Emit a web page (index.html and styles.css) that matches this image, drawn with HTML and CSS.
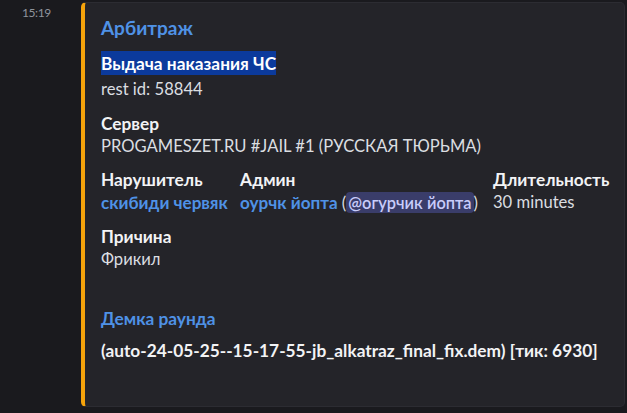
FILE: index.html
```html
<!DOCTYPE html>
<html lang="ru">
<head>
<meta charset="utf-8">
<title>Арбитраж</title>
<link rel="stylesheet" href="styles.css">
</head>
<body>
<div class="message">
  <div class="gutter"><span class="timestamp">15:19</span></div>
  <article class="embed">
    <div class="embed-title">Арбитраж</div>
    <div class="embed-desc">
      <div class="line"><strong class="sel">Выдача наказания ЧС</strong></div>
      <div class="line">rest id: 58844</div>
    </div>
    <div class="fields">
      <div class="field field-full">
        <div class="field-name">Сервер</div>
        <div class="field-value">PROGAMESZET.RU #JAIL #1 (РУССКАЯ ТЮРЬМА)</div>
      </div>
      <div class="field-row">
        <div class="field">
          <div class="field-name">Нарушитель</div>
          <div class="field-value link">скибиди червяк</div>
        </div>
        <div class="field">
          <div class="field-name">Админ</div>
          <div class="field-value"><span class="link">оурчк йопта</span> (<span class="mention">@огурчик йопта</span>)</div>
        </div>
        <div class="field">
          <div class="field-name">Длительность</div>
          <div class="field-value">30 minutes</div>
        </div>
      </div>
      <div class="field field-full">
        <div class="field-name">Причина</div>
        <div class="field-value">Фрикил</div>
      </div>
      <div class="field field-full field-demo">
        <div class="field-name link">Демка раунда</div>
        <div class="field-value demo-value">(auto-24-05-25--15-17-55-jb_alkatraz_final_fix.dem) [тик: 6930]</div>
      </div>
    </div>
  </article>
</div>
</body>
</html>
```
FILE: styles.css
```css
html, body {
  margin: 0;
  padding: 0;
  background: #1a1a1e;
}
body {
  font-family: Lato, "Noto Sans", sans-serif;
  color: #dbdee1;
  width: 627px;
  height: 413px;
  overflow: hidden;
}
.message {
  display: flex;
  padding-top: 2px;
}
.gutter {
  width: 81px;
  flex: 0 0 81px;
}
.timestamp {
  display: block;
  padding-left: 22px;
  margin-top: 3px;
  font-size: 12px;
  letter-spacing: -0.4px;
  line-height: 16px;
  color: #8f949c;
}
.embed {
  box-sizing: border-box;
  width: 544px;
  height: 405px;
  background: #242429;
  border: 1px solid #2c2c32;
  border-left: 4px solid #f5a30b;
  border-radius: 5px;
  padding: 11px 16px 0 16px;
}
.embed-title {
  font-size: 19px;
  font-weight: 700;
  line-height: 27px;
  color: #4f92e6;
  white-space: nowrap;
}
.embed-desc {
  margin-top: 9.5px;
  font-size: 16.6px;
  line-height: 25px;
}
.sel {
  font-weight: 700;
  font-size: 17.3px;
  color: #ffffff;
  background: #0b3a9c;
  padding: 1.5px 0;
}
.fields {
  margin-top: 10.5px;
  display: flex;
  flex-direction: column;
  gap: 10px;
}
.field-row {
  display: grid;
  grid-template-columns: 139px 253px auto;
}
.field {
  white-space: nowrap;
}
.field-name {
  font-size: 17.3px;
  font-weight: 700;
  line-height: 23px;
  color: #f2f3f5;
}
.field-value {
  font-size: 16.6px;
  line-height: 23px;
  color: #dbdee1;
}
.link {
  color: #4f92e6;
  font-weight: 700;
  font-size: 17.1px;
}
.field-name.link {
  color: #4f92e6;
  font-size: 17.3px;
}
.mention {
  display: inline-block;
  font-size: 16.4px;
  font-weight: 600;
  line-height: 21px;
  color: #c9cdfb;
  background: #3a3d6a;
  border-radius: 4px;
  padding: 0 2px;
}
.field-demo {
  margin-top: 26px;
}
.demo-value {
  margin-top: 8.5px;
  font-size: 17.3px;
  font-weight: 700;
  color: #f2f3f5;
}
```
